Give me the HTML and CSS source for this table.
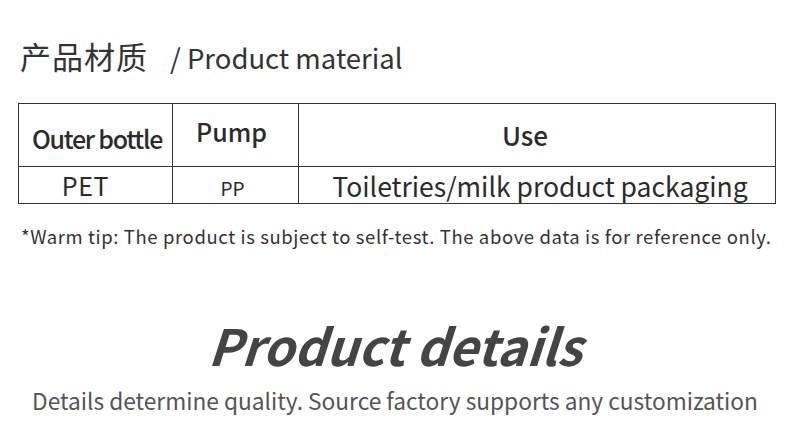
FILE: index.html
```html
<!DOCTYPE html>
<html lang="zh">
<head>
<meta charset="utf-8">
<link rel="stylesheet" href="styles.css">
</head>
<body>
<div class="page">
  <h1 class="title"><span class="cn">产品材质</span><span class="en">/ Product material</span></h1>
  <div class="table">
    <div class="cell head c1"><span class="narrow">Outer bottle</span></div>
    <div class="cell head c2"><span class="pump">Pump</span></div>
    <div class="cell head c3"><span class="use">Use</span></div>
    <div class="cell body c1"><span class="pet">PET</span></div>
    <div class="cell body c2"><span class="pp">PP</span></div>
    <div class="cell body c3"><span class="usage">Toiletries/milk product packaging</span></div>
  </div>
  <p class="tip">*Warm tip: The product is subject to self-test. The above data is for reference only.</p>
  <h2 class="details">Product details</h2>
  <p class="sub">Details determine quality. Source factory supports any customization</p>
</div>
</body>
</html>
```
FILE: styles.css
```css
* { box-sizing: border-box; margin: 0; padding: 0; }
html, body { background: #fff; }
body {
  width: 790px;
  height: 445px;
  overflow: hidden;
  font-family: "Noto Sans CJK SC", "Noto Sans", sans-serif;
  color: #333;
}
.page { padding: 0 14px 0 18px; }
.title {
  display: flex;
  align-items: baseline;
  font-weight: 400;
  padding: 36px 0 0 2px;
  height: 103px;
}
.title .cn { font-size: 31px; letter-spacing: 1px; line-height: 40px; }
.title .en { font-size: 27.5px; margin-left: 22px; line-height: 40px; }
.table {
  display: grid;
  grid-template-columns: 154px 126px 1fr;
  grid-template-rows: 63px 36px;
  width: 758px;
  border: 1px solid #333;
}
.cell {
  display: flex;
  align-items: center;
  justify-content: center;
  color: #2b2b2b;
}
.cell.c1, .cell.c2 { border-right: 1px solid #333; }
.cell.head { border-bottom: 1px solid #333; }
.cell.head .narrow { font-size: 25px; font-weight: 500; letter-spacing: -1.25px; margin-top: 6px; margin-left: 3px; }
.cell.head .pump { font-size: 25px; font-weight: 500; margin-top: -8px; margin-right: 8px; }
.cell.head .use { font-size: 26px; font-weight: 500; margin-right: 24px; margin-top: -2px; }
.cell.body .pet { font-size: 25px; margin-right: 20px; letter-spacing: 0.6px; }
.cell.body .pp { font-size: 19px; margin-top: 4px; margin-right: 6px; }
.cell.body .usage { font-size: 26.5px; margin-left: 6px; }
.tip {
  font-size: 18.5px;
  letter-spacing: 0.6px;
  margin: 16px 0 0 3px;
  line-height: 32px;
  white-space: nowrap;
}
.details {
  font-size: 50px;
  font-style: italic;
  font-weight: 700;
  color: #444;
  text-align: center;
  margin-top: 64px;
  line-height: 56px;
  margin-right: 2px;
  transform: skewX(-4deg);
}
.sub {
  font-size: 22.7px;
  color: #555;
  text-align: center;
  line-height: 36px;
  margin-top: 11px;
  margin-right: 4px;
}
```
